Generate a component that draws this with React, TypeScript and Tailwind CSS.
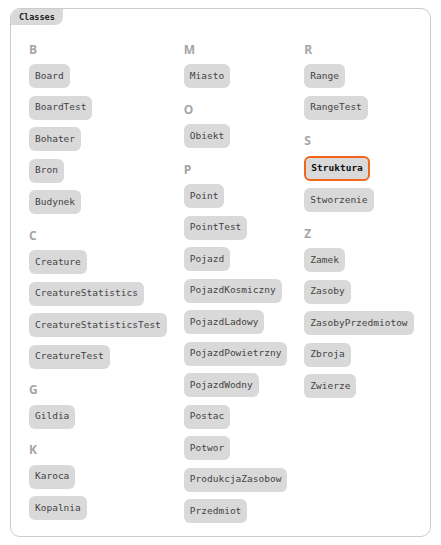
import React from "react";

type Group = { letter: string; items: string[] };

const columns: Group[][] = [
  [
    { letter: "B", items: ["Board", "BoardTest", "Bohater", "Bron", "Budynek"] },
    { letter: "C", items: ["Creature", "CreatureStatistics", "CreatureStatisticsTest", "CreatureTest"] },
    { letter: "G", items: ["Gildia"] },
    { letter: "K", items: ["Karoca", "Kopalnia"] },
  ],
  [
    { letter: "M", items: ["Miasto"] },
    { letter: "O", items: ["Obiekt"] },
    {
      letter: "P",
      items: [
        "Point",
        "PointTest",
        "Pojazd",
        "PojazdKosmiczny",
        "PojazdLadowy",
        "PojazdPowietrzny",
        "PojazdWodny",
        "Postac",
        "Potwor",
        "ProdukcjaZasobow",
        "Przedmiot",
      ],
    },
  ],
  [
    { letter: "R", items: ["Range", "RangeTest"] },
    { letter: "S", items: ["Struktura", "Stworzenie"] },
    { letter: "Z", items: ["Zamek", "Zasoby", "ZasobyPrzedmiotow", "Zbroja", "Zwierze"] },
  ],
];

function ClassButton({ name }: { name: string }) {
  const selected = name === "Struktura";
  if (selected) {
    return (
      <div className="h-[25px] px-[5px] rounded-[6px] bg-[#d9d9d9] border-2 border-[#f2661c] flex items-center font-['DejaVu_Sans_Mono',monospace] text-[9.5px] font-bold text-[#111]">
        {name}
      </div>
    );
  }
  return (
    <div className="h-[24px] px-[6px] rounded-[6px] bg-[#d9d9d9] flex items-center font-['DejaVu_Sans_Mono',monospace] text-[9.5px] text-[#444]">
      {name}
    </div>
  );
}

export default function App() {
  return (
    <div className="w-[441px] h-[545px] bg-white pt-[8px] px-[10px]">
      <div className="h-[529px] border border-[#cccccc] rounded-[10px] overflow-hidden">
        <div className="flex">
          <div className="flex h-[16px] items-center px-[8px] bg-[#d9d9d9] rounded-br-[8px] font-['DejaVu_Sans_Mono',monospace] text-[8.5px] leading-none font-bold text-[#222]">
            Classes
          </div>
        </div>
        <div className="flex items-start gap-[17px] pl-[18px] pt-[17.5px]">
          {columns.map((col, ci) => (
            <div key={ci} className="flex flex-col gap-[14.5px]">
              {col.map((g) => (
                <div key={g.letter} className="flex flex-col items-start gap-[7.5px]">
                  <div className="h-[14px] leading-[14px] text-[12px] font-bold text-[#a5a5a5] font-['Open_Sans',sans-serif]">
                    {g.letter}
                  </div>
                  {g.items.map((it) => (
                    <ClassButton key={it} name={it} />
                  ))}
                </div>
              ))}
            </div>
          ))}
        </div>
      </div>
    </div>
  );
}
